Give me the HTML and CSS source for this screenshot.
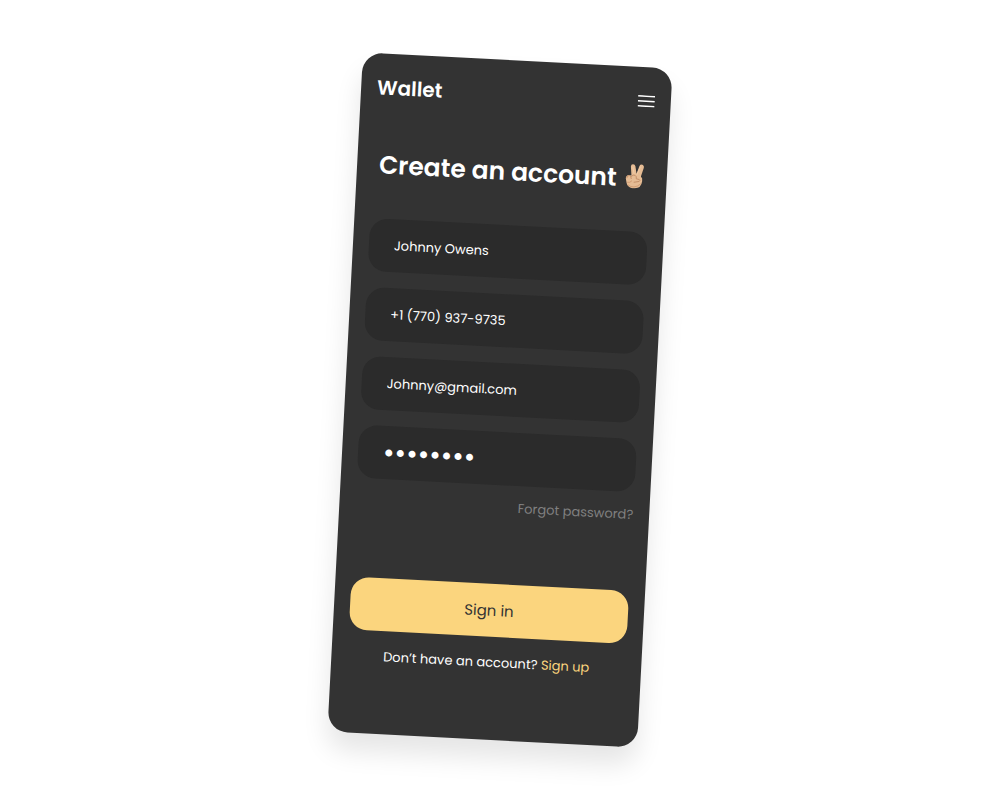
FILE: index.html
```html
<!DOCTYPE html>
<html lang="en">
<head>
    <meta charset="UTF-8">
    <meta name="viewport" content="width=device-width, initial-scale=1.0">
    <title>Wallet</title>
    <link rel="stylesheet" href="styles.css">
</head>
<body>
    <main class="card">
        <header class="topbar">
            <div class="logo">Wallet</div>
            <button class="menu-btn" type="button" aria-label="Menu">
                <svg viewBox="0 0 17 12" aria-hidden="true">
                    <path d="M0 1H17M0 6H17M0 11H17" stroke="#fff" stroke-width="1.6"/>
                </svg>
            </button>
        </header>
        <div class="title">
            <h1>Create an account</h1>
            <svg class="victory" viewBox="0 0 40 50" aria-hidden="true">
                <path d="M13 24 L11 6 Q11 1 15 1 Q19 1 20 5 L23 20 L28 4 Q30 0 34 1 Q38 3 37 7 L32 25 Q36 28 35 34 Q34 48 21 49 L16 49 Q6 48 4 39 L2 30 Q2 24 8 23 Z" fill="#e6bc94"/>
                <path d="M24 21 L30 6 M15 7 L18 20" stroke="#f0cba6" stroke-width="2" fill="none" stroke-linecap="round"/>
                <path d="M4 29 Q4 24 9 24 Q12 25 13 30 M13 26 Q16 21 20 23 Q24 25 23 30 L29 31 Q32 33 29 35 L19 37" stroke="#c08a63" stroke-width="1.7" fill="none" stroke-linecap="round"/>
                <path d="M6 38 Q11 39 14 35 M7 43 Q19 52 32 40" stroke="#cc976f" stroke-width="1.7" fill="none" stroke-linecap="round"/>
            </svg>
        </div>
        <form>
            <div class="fields">
                <input type="text" aria-label="Full name" value="Johnny Owens">
                <input type="tel" aria-label="Phone number" value="+1 (770) 937-9735">
                <input type="email" aria-label="Email" value="Johnny@gmail.com">
                <input type="password" class="password" aria-label="Password" value="12345678">
            </div>
            <a class="forgot" href="#">Forgot password?</a>
            <button class="signin" type="submit">Sign in</button>
        </form>
        <p class="signup">Don’t have an account? <a href="#">Sign up</a></p>
    </main>
</body>
</html>
```
FILE: styles.css
```css
* {
    box-sizing: border-box;
}
body {
    margin: 0;
    min-height: 100vh;
    display: flex;
    justify-content: center;
    align-items: center;
    background: #fff;
    color: #fff;
    font-family: Poppins, Inter, sans-serif;
    font-size: 13px;
    line-height: 20px;
}
.card {
    width: 100%;
    max-width: 310px;
    padding: 16px 16px 67px;
    background: #333;
    border-radius: 20px;
    box-shadow: 0 18px 26px rgba(0, 0, 0, 0.1);
    transform: rotate(3deg);
}
.topbar {
    display: flex;
    justify-content: space-between;
    align-items: center;
    height: 36px;
}
.logo {
    font-size: 20px;
    font-weight: 600;
}
.menu-btn {
    padding: 0;
    background: none;
    border: none;
    cursor: pointer;
}
.menu-btn svg {
    display: block;
    width: 17px;
    height: 12px;
}
.title {
    display: flex;
    align-items: center;
    gap: 8px;
    margin: 41px 0 34px;
    padding-left: 6px;
}
.title h1 {
    margin: 0;
    font-size: 25px;
    font-weight: 600;
    line-height: 38px;
    white-space: nowrap;
}
.victory {
    width: 20px;
    height: 25px;
    flex-shrink: 0;
    margin-bottom: 6px;
}
form {
    display: flex;
    flex-direction: column;
}
.fields {
    display: flex;
    flex-direction: column;
    gap: 16px;
}
.fields input {
    width: 100%;
    height: 53px;
    padding: 0 25px;
    background: #2b2b2b;
    border: none;
    border-radius: 18px;
    color: #fff;
    font: inherit;
    outline: none;
}
.fields .password {
    font-size: 28px;
}
.forgot {
    align-self: flex-end;
    margin-top: 13px;
    color: #808080;
    text-decoration: none;
}
.signin {
    height: 53px;
    margin-top: 66px;
    background: #fbd57e;
    border: none;
    border-radius: 18px;
    color: #333;
    font-family: inherit;
    font-size: 15px;
    cursor: pointer;
}
.signup {
    margin: 16px 0 0;
    text-align: center;
}
.signup a {
    color: #fbd57e;
    text-decoration: none;
}
```
